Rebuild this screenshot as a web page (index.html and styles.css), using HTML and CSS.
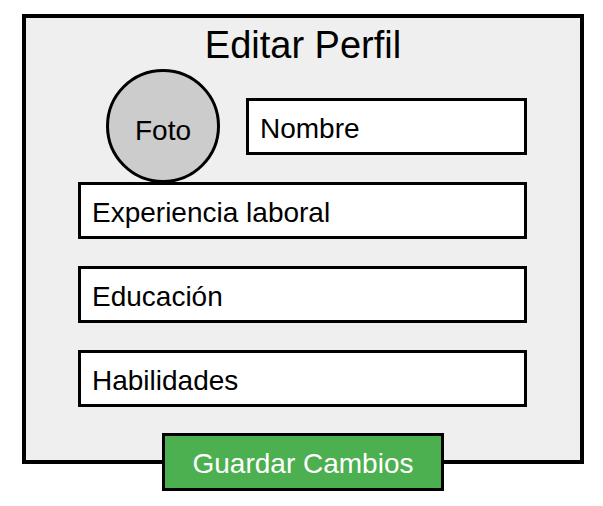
FILE: index.html
```html
<!DOCTYPE html>
<html lang="es">
<head>
<meta charset="utf-8">
<title>Editar Perfil</title>
<link rel="stylesheet" href="styles.css">
</head>
<body>
<div class="page">
  <div class="frame">
    <h1 class="title">Editar Perfil</h1>
    <div class="top-row">
      <div class="photo">Foto</div>
      <div class="field field-name">Nombre</div>
    </div>
    <div class="field field-wide field-first">Experiencia laboral</div>
    <div class="field field-wide">Educación</div>
    <div class="field field-wide">Habilidades</div>
  </div>
  <div class="actions">
    <button class="save">Guardar Cambios</button>
  </div>
</div>
</body>
</html>
```

FILE: styles.css
```css
* { box-sizing: border-box; }

body {
  margin: 0;
  background: #ffffff;
  font-family: "Liberation Sans", Arial, sans-serif;
  color: #000000;
}

.page {
  width: 562px;
  margin: 14px 0 0 22px;
}

.frame {
  height: 450px;
  border: 4px solid #000000;
  background: #efefef;
  display: flex;
  flex-direction: column;
}

.title {
  margin: 8px 0 0;
  font-size: 38px;
  line-height: 38px;
  font-weight: normal;
  text-align: center;
}

.top-row {
  margin-top: 5px;
  display: flex;
  align-items: center;
  gap: 26px;
  padding-left: 80px;
}

.photo {
  width: 114px;
  height: 114px;
  border: 3px solid #000000;
  border-radius: 50%;
  background: #cccccc;
  display: flex;
  align-items: center;
  justify-content: center;
  padding-top: 9px;
  font-size: 28px;
  line-height: 27px;
  flex: none;
}

.field {
  height: 57px;
  border: 3px solid #000000;
  background: #ffffff;
  padding: 14px 11px 10px;
  font-size: 28px;
  line-height: 27px;
  white-space: nowrap;
}

.field-name {
  width: 281px;
  flex: none;
}

.field-wide {
  margin: 27px 53px 0 52px;
}

.field-wide.field-first {
  margin-top: -1px;
}

.actions {
  display: flex;
  justify-content: center;
  margin-top: -31px;
  position: relative;
}

.save {
  width: 282px;
  height: 58px;
  border: 3px solid #000000;
  background: #4caf50;
  color: #ffffff;
  font-family: "Liberation Sans", Arial, sans-serif;
  font-size: 28px;
  line-height: 27px;
  padding: 14px 0 11px;
  margin: 0;
  text-align: center;
  cursor: pointer;
}
```
